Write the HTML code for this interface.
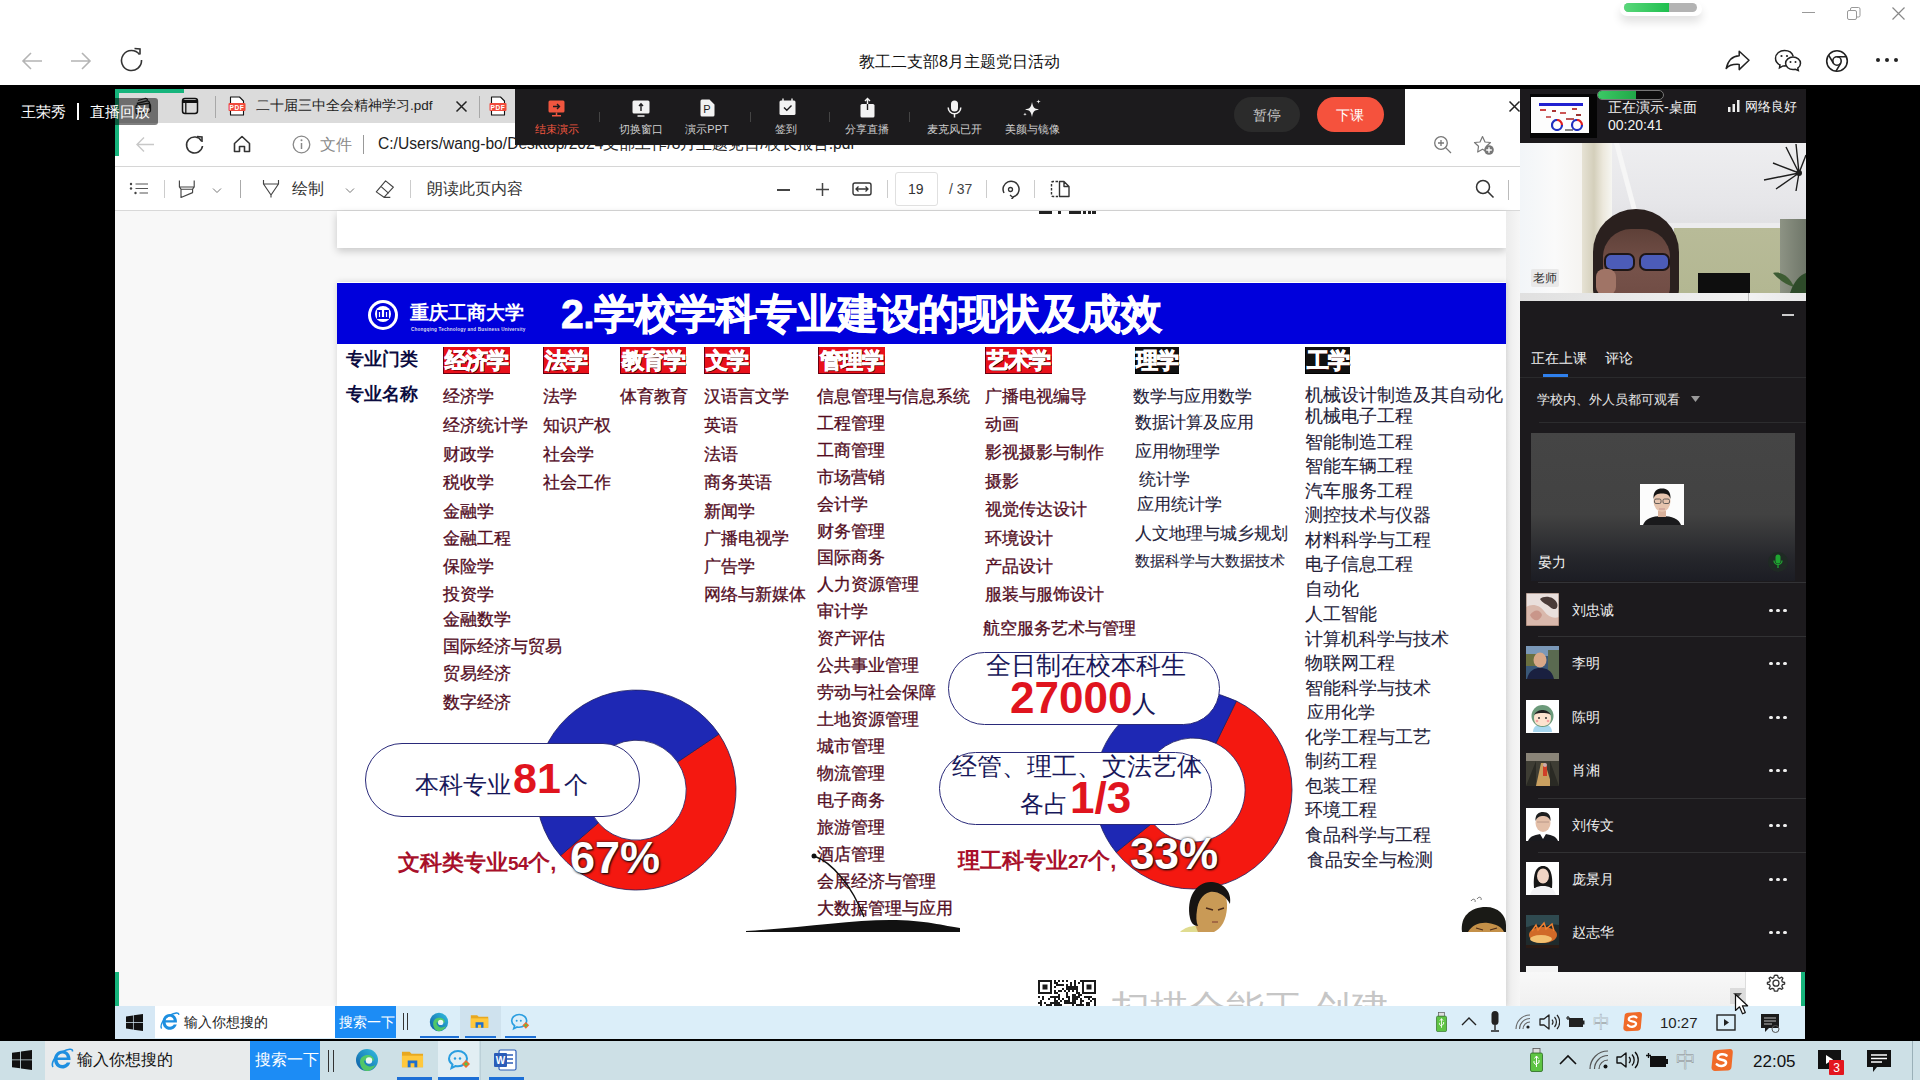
<!DOCTYPE html><html><head><meta charset="utf-8"><style>
*{margin:0;padding:0;box-sizing:border-box}
html,body{width:1920px;height:1080px;overflow:hidden;background:#000;font-family:"Liberation Sans",sans-serif}
.t{position:absolute;white-space:nowrap}
.r{position:absolute}
</style></head><body>
<div class="r" style="left:0px;top:0px;width:1920px;height:85px;background:#fff;"></div>
<svg class="r" style="left:20px;top:50px;" width="24" height="22" viewBox="0 0 24 22"><path d="M22 11H3M11 3L3 11L11 19" stroke="#b4b4b4" stroke-width="1.6" fill="none"/></svg>
<svg class="r" style="left:69px;top:50px;" width="24" height="22" viewBox="0 0 24 22"><path d="M2 11H21M13 3L21 11L13 19" stroke="#b4b4b4" stroke-width="1.6" fill="none"/></svg>
<svg class="r" style="left:119px;top:46px;" width="26" height="26" viewBox="0 0 26 26"><path d="M20.5 8.5A10 10 0 1 0 22.5 14" stroke="#333" stroke-width="1.6" fill="none"/><path d="M15.5 2.5L21 3V8.5" stroke="#333" stroke-width="1.6" fill="none"/></svg>
<div class="t " style="left:859px;top:54.0px;font-size:16px;line-height:16px;color:#111;font-weight:normal;">教工二支部8月主题党日活动</div>
<div class="r" style="left:1620px;top:2px;width:82px;height:14px;background:transparent;border-radius:8px;box-shadow:0 6px 10px rgba(0,0,0,0.12)"></div>
<div class="r" style="left:1624px;top:3px;width:73px;height:9px;background:#b3b3b3;border-radius:5px"></div>
<div class="r" style="left:1624px;top:3px;width:45px;height:9px;background:linear-gradient(90deg,#5ad77a,#1fbf4f);border-radius:5px 0 0 5px"></div>
<div class="r" style="left:1802px;top:12px;width:13px;height:1px;background:#999;"></div>
<svg class="r" style="left:1846px;top:6px;" width="16" height="16" viewBox="0 0 16 16"><rect x="1.5" y="4.5" width="9" height="9" rx="1.5" stroke="#999" fill="none"/><path d="M4.5 4.5V3A1.5 1.5 0 0 1 6 1.5H12.5A1.5 1.5 0 0 1 14 3V9.5A1.5 1.5 0 0 1 12.5 11H10.5" stroke="#999" fill="none"/></svg>
<svg class="r" style="left:1891px;top:6px;" width="15" height="15" viewBox="0 0 15 15"><path d="M1.5 1.5L13.5 13.5M13.5 1.5L1.5 13.5" stroke="#888" stroke-width="1.2"/></svg>
<svg class="r" style="left:1724px;top:48px;" width="28" height="24" viewBox="0 0 28 24"><path d="M2.2 20.4C4 12.5 9 8 15.2 7.7V3.2L25 12.3L15.2 21.6V16.4C9 16 5 17 2.2 20.4Z" stroke="#222" stroke-width="1.5" fill="none" stroke-linejoin="round"/></svg>
<svg class="r" style="left:1774px;top:49px;" width="28" height="24" viewBox="0 0 28 24"><path d="M12 16.5C11.5 16.8 10 17 9 16.9L5.5 18.8L6 16C3 14.5 1.5 12 1.5 9.3C1.5 4.9 5.5 1.5 10.5 1.5C14.7 1.5 18.2 4 19.2 7.3" stroke="#222" stroke-width="1.5" fill="none"/><path d="M19 8C23 8 26.5 10.8 26.5 14.3C26.5 16.4 25.5 18 23.8 19.2L24.3 21.5L21.3 20.2C20.5 20.5 19.8 20.6 19 20.6C15 20.6 11.6 17.8 11.6 14.3C11.6 10.8 15 8 19 8Z" stroke="#222" stroke-width="1.5" fill="none"/><circle cx="7.5" cy="7" r="1.1" fill="#222"/><circle cx="13" cy="7" r="1.1" fill="#222"/><circle cx="16.5" cy="13" r="1" fill="#222"/><circle cx="21.5" cy="13" r="1" fill="#222"/></svg>
<svg class="r" style="left:1825px;top:49px;" width="24" height="24" viewBox="0 0 24 24"><circle cx="12" cy="12" r="10.3" stroke="#222" stroke-width="1.6" fill="none"/><circle cx="12" cy="12" r="4.2" stroke="#222" stroke-width="1.6" fill="none"/><path d="M12 7.8H21.5M8.3 14L3.6 6.2M15.8 14.2L11 22.2" stroke="#222" stroke-width="1.6" fill="none"/></svg>
<div class="r" style="left:1876px;top:58px;width:4px;height:4px;background:#222;border-radius:50%"></div>
<div class="r" style="left:1885px;top:58px;width:4px;height:4px;background:#222;border-radius:50%"></div>
<div class="r" style="left:1894px;top:58px;width:4px;height:4px;background:#222;border-radius:50%"></div>
<div class="t " style="left:21px;top:103.5px;font-size:15px;line-height:15px;color:#fff;font-weight:normal;">王荣秀</div>
<div class="r" style="left:77px;top:103px;width:1.5px;height:17px;background:#fff;"></div>
<div class="r" style="left:115px;top:89px;width:1405px;height:34px;background:#dbdbdb;"></div>
<div class="r" style="left:115px;top:123px;width:1405px;height:43px;background:#fff;"></div>
<div class="r" style="left:115px;top:166px;width:1405px;height:1px;background:#d6d6d6;"></div>
<div class="r" style="left:115px;top:167px;width:1405px;height:44px;background:#fff;"></div>
<div class="r" style="left:115px;top:210px;width:1405px;height:1px;background:#d9d9d9;"></div>
<div class="r" style="left:115px;top:211px;width:1405px;height:795px;background:#f8f8f8;"></div>
<div class="r" style="left:115px;top:89px;width:69px;height:4px;background:#16b47c;"></div>
<div class="r" style="left:115px;top:89px;width:4px;height:67px;background:#16b47c;"></div>
<div class="r" style="left:115px;top:972px;width:4px;height:34px;background:#16b47c;"></div>
<svg class="r" style="left:133px;top:96px;" width="22" height="20" viewBox="0 0 22 20"><g stroke="#222" stroke-width="1.3" fill="none" stroke-linejoin="round"><path d="M5 4.5L12 2.5C13.5 2.2 14.5 3 14.5 4.5"/><path d="M3.8 7.5L13.5 5C15 4.7 16.5 5.5 16.5 7V13"/><path d="M3 10.5C3 9.5 3.5 9 4.5 8.8L15 7.5C16.5 7.3 17.5 8.2 17.5 9.5V14.5C17.5 15.5 17 16 16 16.2L5 18C3.8 18.2 3 17.3 3 16.2Z"/></g></svg>
<svg class="r" style="left:181px;top:97px;" width="18" height="18" viewBox="0 0 18 18"><rect x="1.5" y="1.5" width="15" height="15" rx="2.5" stroke="#111" stroke-width="1.5" fill="none"/><path d="M1.5 4.5H16.5" stroke="#111" stroke-width="3"/><path d="M4.8 4.5V16.5" stroke="#111" stroke-width="1.3"/></svg>
<div class="r" style="left:84px;top:98px;width:74px;height:27px;background:rgba(0,0,0,0.5);border-radius:3px"></div>
<div class="t " style="left:90px;top:103.5px;font-size:15px;line-height:15px;color:#fff;font-weight:normal;">直播回放</div>
<div class="r" style="left:215px;top:96px;width:1px;height:22px;background:#a8a8a8;"></div>
<svg class="r" style="left:228px;top:96px;" width="18" height="20" viewBox="0 0 18 20"><path d="M2.5 1H11.5L15.5 5V19H2.5Z" fill="#fff" stroke="#111" stroke-width="1.1" stroke-linejoin="round"/><rect x="0.5" y="7" width="17" height="8" rx="1" fill="#f04a3c"/><text x="9" y="13.6" font-size="6.5" font-family="Liberation Sans" font-weight="bold" fill="#fff" text-anchor="middle" letter-spacing="0.6">PDF</text></svg>
<div class="t " style="left:256px;top:99.2px;font-size:13.5px;line-height:13.5px;color:#222;font-weight:normal;">二十届三中全会精神学习.pdf</div>
<svg class="r" style="left:455px;top:100px;" width="13" height="13" viewBox="0 0 13 13"><path d="M1.5 1.5L11.5 11.5M11.5 1.5L1.5 11.5" stroke="#222" stroke-width="1.5"/></svg>
<div class="r" style="left:479px;top:96px;width:1px;height:22px;background:#a8a8a8;"></div>
<svg class="r" style="left:489px;top:96px;" width="18" height="20" viewBox="0 0 18 20"><path d="M2.5 1H11.5L15.5 5V19H2.5Z" fill="#fff" stroke="#111" stroke-width="1.1" stroke-linejoin="round"/><rect x="0.5" y="7" width="17" height="8" rx="1" fill="#f04a3c"/><text x="9" y="13.6" font-size="6.5" font-family="Liberation Sans" font-weight="bold" fill="#fff" text-anchor="middle" letter-spacing="0.6">PDF</text></svg>
<div class="r" style="left:1405px;top:89px;width:115px;height:34px;background:#fff;"></div>
<svg class="r" style="left:1508px;top:100px;" width="13" height="13" viewBox="0 0 13 13"><path d="M1.5 1.5L11.5 11.5M11.5 1.5L1.5 11.5" stroke="#222" stroke-width="1.5"/></svg>
<svg class="r" style="left:135px;top:136px;" width="20" height="17" viewBox="0 0 20 17"><path d="M19 8.5H2M9 1.5L2 8.5L9 15.5" stroke="#c8c8c8" stroke-width="1.4" fill="none"/></svg>
<svg class="r" style="left:184px;top:134px;" width="21" height="21" viewBox="0 0 21 21"><path d="M17.5 7A8 8 0 1 0 18.5 12" stroke="#333" stroke-width="1.6" fill="none"/><path d="M13 2.5L18 3V8" stroke="#333" stroke-width="1.6" fill="none"/></svg>
<svg class="r" style="left:232px;top:134px;" width="20" height="20" viewBox="0 0 20 20"><path d="M2.5 9.5L10 2.5L17.5 9.5V17.5H12.5V12.5H7.5V17.5H2.5Z" stroke="#333" stroke-width="1.6" fill="none" stroke-linejoin="round"/></svg>
<svg class="r" style="left:292px;top:135px;" width="19" height="19" viewBox="0 0 19 19"><circle cx="9.5" cy="9.5" r="8.3" stroke="#888" stroke-width="1.3" fill="none"/><path d="M9.5 8V14" stroke="#888" stroke-width="1.5"/><circle cx="9.5" cy="5.3" r="1" fill="#888"/></svg>
<div class="t " style="left:320px;top:137.0px;font-size:16px;line-height:16px;color:#8a8a8a;font-weight:normal;">文件</div>
<div class="r" style="left:363px;top:135px;width:1px;height:19px;background:#999;"></div>
<div class="t " style="left:378px;top:136.2px;font-size:15.6px;line-height:15.6px;color:#222;font-weight:normal;">C:/Users/wang-bo/Desktop/2024支部工作/8月主题党日/校长报告.pdf</div>
<svg class="r" style="left:1433px;top:135px;" width="20" height="20" viewBox="0 0 20 20"><circle cx="8" cy="8" r="6.3" stroke="#777" stroke-width="1.3" fill="none"/><path d="M12.6 12.6L18 18M5 8H11M8 5V11" stroke="#777" stroke-width="1.3"/></svg>
<svg class="r" style="left:1473px;top:135px;" width="22" height="20" viewBox="0 0 22 20"><path d="M9.5 1.5L12 7L17.5 7.5L13.5 11.3L14.3 17L9.5 14.2L4.7 17L5.5 11.3L1.5 7.5L7 7Z" stroke="#777" stroke-width="1.2" fill="none" stroke-linejoin="round"/><circle cx="16" cy="15" r="4.8" fill="#777"/><path d="M16 12.2V17.8M13.2 15H18.8" stroke="#fff" stroke-width="1.4"/></svg>
<svg class="r" style="left:128px;top:180px;" width="22" height="16" viewBox="0 0 22 16"><circle cx="3" cy="4" r="1.2" fill="#444"/><circle cx="3" cy="8.5" r="1.2" fill="#444"/><circle cx="7.5" cy="13" r="1.2" fill="#444"/><path d="M7.5 4H20M7.5 8.5H20M11.5 13H20" stroke="#555" stroke-width="1.1"/></svg>
<div class="r" style="left:164px;top:180px;width:1px;height:18px;background:#ccc;"></div>
<svg class="r" style="left:177px;top:179px;" width="20" height="20" viewBox="0 0 20 20"><path d="M2.4 1.5V8L4 10.2V18.5L15.6 13.6V10.2L17.2 8V1.5M2.4 8H17.2M4 10.2H15.6" stroke="#444" stroke-width="1.15" fill="none" stroke-linejoin="round"/></svg>
<svg class="r" style="left:211px;top:186px;" width="12" height="8" viewBox="0 0 12 8"><path d="M2 2.5L6 6.5L10 2.5" stroke="#777" stroke-width="1" fill="none"/></svg>
<div class="r" style="left:240px;top:180px;width:1px;height:18px;background:#aaa;"></div>
<svg class="r" style="left:262px;top:179px;" width="20" height="20" viewBox="0 0 20 20"><path d="M1.5 1V5H16.5V1M1.5 5L9 16L16.5 5M9 16V18.5" stroke="#444" stroke-width="1.15" fill="none" stroke-linejoin="round"/></svg>
<div class="t " style="left:292px;top:181.0px;font-size:16px;line-height:16px;color:#333;font-weight:normal;">绘制</div>
<svg class="r" style="left:344px;top:186px;" width="12" height="8" viewBox="0 0 12 8"><path d="M2 2.5L6 6.5L10 2.5" stroke="#777" stroke-width="1" fill="none"/></svg>
<svg class="r" style="left:375px;top:179px;" width="20" height="20" viewBox="0 0 20 20"><path d="M1.3 12.9L10.6 1.9L18.4 8.2L9 18.3Z M5.9 7.4L13.7 14.4 M9 18.3H15.3" stroke="#444" stroke-width="1.15" fill="none" stroke-linejoin="round"/></svg>
<div class="r" style="left:410px;top:180px;width:1px;height:18px;background:#ccc;"></div>
<div class="t " style="left:427px;top:181.0px;font-size:16px;line-height:16px;color:#333;font-weight:normal;">朗读此页内容</div>
<div class="r" style="left:777px;top:189px;width:13px;height:1.5px;background:#444;"></div>
<svg class="r" style="left:815px;top:182px;" width="15" height="15" viewBox="0 0 15 15"><path d="M7.5 1V14M1 7.5H14" stroke="#444" stroke-width="1.5"/></svg>
<svg class="r" style="left:852px;top:181px;" width="20" height="16" viewBox="0 0 20 16"><rect x="1" y="2" width="18" height="12" rx="2" stroke="#333" stroke-width="1.4" fill="none"/><path d="M4 8H16M6.5 5.5L4 8L6.5 10.5M13.5 5.5L16 8L13.5 10.5" stroke="#333" stroke-width="1.3" fill="none"/></svg>
<div class="r" style="left:887px;top:180px;width:1px;height:18px;background:#ccc;"></div>
<div class="r" style="left:895px;top:172px;width:43px;height:34px;background:#fff;border:1px solid #e0e0e0;border-radius:3px"></div>
<div class="t " style="left:908px;top:182.0px;font-size:14px;line-height:14px;color:#333;font-weight:normal;">19</div>
<div class="t " style="left:949px;top:182.0px;font-size:14px;line-height:14px;color:#444;font-weight:normal;">/ 37</div>
<div class="r" style="left:986px;top:180px;width:1px;height:18px;background:#ccc;"></div>
<svg class="r" style="left:1001px;top:179px;" width="20" height="20" viewBox="0 0 20 20"><path d="M3 14A8 8 0 1 1 12 18" stroke="#333" stroke-width="1.5" fill="none"/><path d="M9 16L12 18.5L10 21" stroke="#333" stroke-width="1.4" fill="none"/><circle cx="9.5" cy="10.5" r="2" stroke="#333" stroke-width="1.3" fill="none"/></svg>
<div class="r" style="left:1034px;top:180px;width:1px;height:18px;background:#ccc;"></div>
<svg class="r" style="left:1050px;top:180px;" width="21" height="18" viewBox="0 0 21 18"><path d="M8 1.5H3A1.5 1.5 0 0 0 1.5 3V15A1.5 1.5 0 0 0 3 16.5H8" stroke="#333" stroke-width="1.4" fill="none" stroke-dasharray="2.5 1.5"/><path d="M9.5 1.5H14L19 6.5V16.5H9.5Z M14 1.5V6.5H19" stroke="#333" stroke-width="1.4" fill="none" stroke-linejoin="round"/></svg>
<svg class="r" style="left:1475px;top:179px;" width="20" height="20" viewBox="0 0 20 20"><circle cx="8" cy="8" r="6.5" stroke="#333" stroke-width="1.5" fill="none"/><path d="M12.8 12.8L18.5 18.5" stroke="#333" stroke-width="1.6"/></svg>
<div class="r" style="left:1508px;top:180px;width:1px;height:20px;background:#bbb;"></div>
<div class="r" style="left:337px;top:211px;width:1169px;height:37px;background:#fff;box-shadow:0 3px 8px rgba(0,0,0,0.2)"></div>
<div class="r" style="left:1039px;top:211px;width:13px;height:3px;background:#222;"></div>
<div class="r" style="left:1058px;top:211px;width:3px;height:3px;background:#222;"></div>
<div class="r" style="left:1069px;top:211px;width:12px;height:3px;background:#222;"></div>
<div class="r" style="left:1083px;top:211px;width:3px;height:3px;background:#222;"></div>
<div class="r" style="left:1088px;top:211px;width:3px;height:3px;background:#222;"></div>
<div class="r" style="left:1092px;top:211px;width:4px;height:3px;background:#222;"></div>
<div class="r" style="left:1506px;top:211px;width:14px;height:795px;background:linear-gradient(90deg,#ececec,#f6f6f6);"></div>
<div class="r" style="left:337px;top:282px;width:1169px;height:724px;background:#fff;box-shadow:0 0 6px rgba(0,0,0,0.15)"></div>
<div class="r" style="left:337px;top:283px;width:1169px;height:61px;background:#0000dc;"></div>
<svg class="r" style="left:366px;top:298px;" width="34" height="34" viewBox="0 0 34 34"><circle cx="17" cy="17" r="15" fill="#fff"/><circle cx="17" cy="17" r="12" fill="#0000dc"/><circle cx="17" cy="16" r="8" fill="#fff"/><path d="M12 20V13H15V20M19 20V13H22V20M11 20H23" stroke="#0000dc" stroke-width="1.8" fill="none"/></svg>
<div class="t " style="left:410px;top:302.5px;font-size:19px;line-height:19px;color:#fff;font-weight:bold;font-family:"Liberation Serif",serif;letter-spacing:2.4px;font-style:italic">重庆工商大学</div>
<div class="t " style="left:411px;top:327.7px;font-size:4.6px;line-height:4.6px;color:#dde;font-weight:bold;letter-spacing:0.2px">Chongqing Technology and Business University</div>
<div class="t " style="left:561px;top:293.5px;font-size:41px;line-height:41px;color:#fff;font-weight:bold;letter-spacing:-0.5px;-webkit-text-stroke:0.8px #fff">2.学校学科专业建设的现状及成效</div>
<div class="t " style="left:346px;top:351.2px;font-size:17.5px;line-height:17.5px;color:#0c0c40;font-weight:bold;">专业门类</div>
<div class="t " style="left:346px;top:386.2px;font-size:17.5px;line-height:17.5px;color:#0c0c40;font-weight:bold;">专业名称</div>
<div class="r" style="left:443px;top:347px;width:67px;height:27px;background:#e8101a;box-shadow:inset 1px -1px 0 #6a0010"></div>
<div class="t" style="left:443px;top:347px;width:67px;height:27px;text-align:center;font-size:22px;line-height:28px;color:#fff;font-weight:bold;letter-spacing:-1px;-webkit-text-stroke:0.9px #fff;text-shadow:1px 1px 0 #300">经济学</div>
<div class="r" style="left:543px;top:347px;width:46px;height:27px;background:#e8101a;box-shadow:inset 1px -1px 0 #6a0010"></div>
<div class="t" style="left:543px;top:347px;width:46px;height:27px;text-align:center;font-size:22px;line-height:28px;color:#fff;font-weight:bold;letter-spacing:-1px;-webkit-text-stroke:0.9px #fff;text-shadow:1px 1px 0 #300">法学</div>
<div class="r" style="left:620px;top:347px;width:66px;height:27px;background:#e8101a;box-shadow:inset 1px -1px 0 #6a0010"></div>
<div class="t" style="left:620px;top:347px;width:66px;height:27px;text-align:center;font-size:22px;line-height:28px;color:#fff;font-weight:bold;letter-spacing:-1px;-webkit-text-stroke:0.9px #fff;text-shadow:1px 1px 0 #300">教育学</div>
<div class="r" style="left:704px;top:347px;width:46px;height:27px;background:#e8101a;box-shadow:inset 1px -1px 0 #6a0010"></div>
<div class="t" style="left:704px;top:347px;width:46px;height:27px;text-align:center;font-size:22px;line-height:28px;color:#fff;font-weight:bold;letter-spacing:-1px;-webkit-text-stroke:0.9px #fff;text-shadow:1px 1px 0 #300">文学</div>
<div class="r" style="left:818px;top:347px;width:67px;height:27px;background:#e8101a;box-shadow:inset 1px -1px 0 #6a0010"></div>
<div class="t" style="left:818px;top:347px;width:67px;height:27px;text-align:center;font-size:22px;line-height:28px;color:#fff;font-weight:bold;letter-spacing:-1px;-webkit-text-stroke:0.9px #fff;text-shadow:1px 1px 0 #300">管理学</div>
<div class="r" style="left:985px;top:347px;width:67px;height:27px;background:#e8101a;box-shadow:inset 1px -1px 0 #6a0010"></div>
<div class="t" style="left:985px;top:347px;width:67px;height:27px;text-align:center;font-size:22px;line-height:28px;color:#fff;font-weight:bold;letter-spacing:-1px;-webkit-text-stroke:0.9px #fff;text-shadow:1px 1px 0 #300">艺术学</div>
<div class="r" style="left:1135px;top:347px;width:44px;height:27px;background:#111;box-shadow:inset 1px -1px 0 #000"></div>
<div class="t" style="left:1135px;top:347px;width:44px;height:27px;text-align:center;font-size:22px;line-height:28px;color:#fff;font-weight:bold;letter-spacing:-1px;-webkit-text-stroke:0.9px #fff;text-shadow:1px 1px 0 #300">理学</div>
<div class="r" style="left:1305px;top:347px;width:45px;height:27px;background:#111;box-shadow:inset 1px -1px 0 #000"></div>
<div class="t" style="left:1305px;top:347px;width:45px;height:27px;text-align:center;font-size:22px;line-height:28px;color:#fff;font-weight:bold;letter-spacing:-1px;-webkit-text-stroke:0.9px #fff;text-shadow:1px 1px 0 #300">工学</div>
<div class="t " style="left:443px;top:388.3px;font-size:17.4px;line-height:17.4px;color:#520c1e;font-weight:normal;-webkit-text-stroke:0.3px #520c1e">经济学</div>
<div class="t " style="left:443px;top:417.3px;font-size:17.4px;line-height:17.4px;color:#520c1e;font-weight:normal;-webkit-text-stroke:0.3px #520c1e">经济统计学</div>
<div class="t " style="left:443px;top:446.3px;font-size:17.4px;line-height:17.4px;color:#520c1e;font-weight:normal;-webkit-text-stroke:0.3px #520c1e">财政学</div>
<div class="t " style="left:443px;top:474.3px;font-size:17.4px;line-height:17.4px;color:#520c1e;font-weight:normal;-webkit-text-stroke:0.3px #520c1e">税收学</div>
<div class="t " style="left:443px;top:503.3px;font-size:17.4px;line-height:17.4px;color:#520c1e;font-weight:normal;-webkit-text-stroke:0.3px #520c1e">金融学</div>
<div class="t " style="left:443px;top:530.3px;font-size:17.4px;line-height:17.4px;color:#520c1e;font-weight:normal;-webkit-text-stroke:0.3px #520c1e">金融工程</div>
<div class="t " style="left:443px;top:558.3px;font-size:17.4px;line-height:17.4px;color:#520c1e;font-weight:normal;-webkit-text-stroke:0.3px #520c1e">保险学</div>
<div class="t " style="left:443px;top:586.3px;font-size:17.4px;line-height:17.4px;color:#520c1e;font-weight:normal;-webkit-text-stroke:0.3px #520c1e">投资学</div>
<div class="t " style="left:443px;top:611.3px;font-size:17.4px;line-height:17.4px;color:#520c1e;font-weight:normal;-webkit-text-stroke:0.3px #520c1e">金融数学</div>
<div class="t " style="left:443px;top:638.3px;font-size:17.4px;line-height:17.4px;color:#520c1e;font-weight:normal;-webkit-text-stroke:0.3px #520c1e">国际经济与贸易</div>
<div class="t " style="left:443px;top:665.3px;font-size:17.4px;line-height:17.4px;color:#520c1e;font-weight:normal;-webkit-text-stroke:0.3px #520c1e">贸易经济</div>
<div class="t " style="left:443px;top:694.3px;font-size:17.4px;line-height:17.4px;color:#520c1e;font-weight:normal;-webkit-text-stroke:0.3px #520c1e">数字经济</div>
<div class="t " style="left:543px;top:388.3px;font-size:17.4px;line-height:17.4px;color:#520c1e;font-weight:normal;-webkit-text-stroke:0.3px #520c1e">法学</div>
<div class="t " style="left:543px;top:417.3px;font-size:17.4px;line-height:17.4px;color:#520c1e;font-weight:normal;-webkit-text-stroke:0.3px #520c1e">知识产权</div>
<div class="t " style="left:543px;top:446.3px;font-size:17.4px;line-height:17.4px;color:#520c1e;font-weight:normal;-webkit-text-stroke:0.3px #520c1e">社会学</div>
<div class="t " style="left:543px;top:474.3px;font-size:17.4px;line-height:17.4px;color:#520c1e;font-weight:normal;-webkit-text-stroke:0.3px #520c1e">社会工作</div>
<div class="t " style="left:620px;top:388.3px;font-size:17.4px;line-height:17.4px;color:#520c1e;font-weight:normal;-webkit-text-stroke:0.3px #520c1e">体育教育</div>
<div class="t " style="left:704px;top:388.3px;font-size:17.4px;line-height:17.4px;color:#520c1e;font-weight:normal;-webkit-text-stroke:0.3px #520c1e">汉语言文学</div>
<div class="t " style="left:704px;top:417.3px;font-size:17.4px;line-height:17.4px;color:#520c1e;font-weight:normal;-webkit-text-stroke:0.3px #520c1e">英语</div>
<div class="t " style="left:704px;top:446.3px;font-size:17.4px;line-height:17.4px;color:#520c1e;font-weight:normal;-webkit-text-stroke:0.3px #520c1e">法语</div>
<div class="t " style="left:704px;top:474.3px;font-size:17.4px;line-height:17.4px;color:#520c1e;font-weight:normal;-webkit-text-stroke:0.3px #520c1e">商务英语</div>
<div class="t " style="left:704px;top:503.3px;font-size:17.4px;line-height:17.4px;color:#520c1e;font-weight:normal;-webkit-text-stroke:0.3px #520c1e">新闻学</div>
<div class="t " style="left:704px;top:530.3px;font-size:17.4px;line-height:17.4px;color:#520c1e;font-weight:normal;-webkit-text-stroke:0.3px #520c1e">广播电视学</div>
<div class="t " style="left:704px;top:558.3px;font-size:17.4px;line-height:17.4px;color:#520c1e;font-weight:normal;-webkit-text-stroke:0.3px #520c1e">广告学</div>
<div class="t " style="left:704px;top:586.3px;font-size:17.4px;line-height:17.4px;color:#520c1e;font-weight:normal;-webkit-text-stroke:0.3px #520c1e">网络与新媒体</div>
<div class="t " style="left:817px;top:388.3px;font-size:17.4px;line-height:17.4px;color:#520c1e;font-weight:normal;-webkit-text-stroke:0.3px #520c1e">信息管理与信息系统</div>
<div class="t " style="left:817px;top:415.3px;font-size:17.4px;line-height:17.4px;color:#520c1e;font-weight:normal;-webkit-text-stroke:0.3px #520c1e">工程管理</div>
<div class="t " style="left:817px;top:442.3px;font-size:17.4px;line-height:17.4px;color:#520c1e;font-weight:normal;-webkit-text-stroke:0.3px #520c1e">工商管理</div>
<div class="t " style="left:817px;top:469.3px;font-size:17.4px;line-height:17.4px;color:#520c1e;font-weight:normal;-webkit-text-stroke:0.3px #520c1e">市场营销</div>
<div class="t " style="left:817px;top:496.3px;font-size:17.4px;line-height:17.4px;color:#520c1e;font-weight:normal;-webkit-text-stroke:0.3px #520c1e">会计学</div>
<div class="t " style="left:817px;top:523.3px;font-size:17.4px;line-height:17.4px;color:#520c1e;font-weight:normal;-webkit-text-stroke:0.3px #520c1e">财务管理</div>
<div class="t " style="left:817px;top:549.3px;font-size:17.4px;line-height:17.4px;color:#520c1e;font-weight:normal;-webkit-text-stroke:0.3px #520c1e">国际商务</div>
<div class="t " style="left:817px;top:576.3px;font-size:17.4px;line-height:17.4px;color:#520c1e;font-weight:normal;-webkit-text-stroke:0.3px #520c1e">人力资源管理</div>
<div class="t " style="left:817px;top:603.3px;font-size:17.4px;line-height:17.4px;color:#520c1e;font-weight:normal;-webkit-text-stroke:0.3px #520c1e">审计学</div>
<div class="t " style="left:817px;top:630.3px;font-size:17.4px;line-height:17.4px;color:#520c1e;font-weight:normal;-webkit-text-stroke:0.3px #520c1e">资产评估</div>
<div class="t " style="left:817px;top:657.3px;font-size:17.4px;line-height:17.4px;color:#520c1e;font-weight:normal;-webkit-text-stroke:0.3px #520c1e">公共事业管理</div>
<div class="t " style="left:817px;top:684.3px;font-size:17.4px;line-height:17.4px;color:#520c1e;font-weight:normal;-webkit-text-stroke:0.3px #520c1e">劳动与社会保障</div>
<div class="t " style="left:817px;top:711.3px;font-size:17.4px;line-height:17.4px;color:#520c1e;font-weight:normal;-webkit-text-stroke:0.3px #520c1e">土地资源管理</div>
<div class="t " style="left:817px;top:738.3px;font-size:17.4px;line-height:17.4px;color:#520c1e;font-weight:normal;-webkit-text-stroke:0.3px #520c1e">城市管理</div>
<div class="t " style="left:817px;top:765.3px;font-size:17.4px;line-height:17.4px;color:#520c1e;font-weight:normal;-webkit-text-stroke:0.3px #520c1e">物流管理</div>
<div class="t " style="left:817px;top:792.3px;font-size:17.4px;line-height:17.4px;color:#520c1e;font-weight:normal;-webkit-text-stroke:0.3px #520c1e">电子商务</div>
<div class="t " style="left:817px;top:819.3px;font-size:17.4px;line-height:17.4px;color:#520c1e;font-weight:normal;-webkit-text-stroke:0.3px #520c1e">旅游管理</div>
<div class="t " style="left:817px;top:846.3px;font-size:17.4px;line-height:17.4px;color:#520c1e;font-weight:normal;-webkit-text-stroke:0.3px #520c1e">酒店管理</div>
<div class="t " style="left:817px;top:873.3px;font-size:17.4px;line-height:17.4px;color:#520c1e;font-weight:normal;-webkit-text-stroke:0.3px #520c1e">会展经济与管理</div>
<div class="t " style="left:817px;top:900.3px;font-size:17.4px;line-height:17.4px;color:#520c1e;font-weight:normal;-webkit-text-stroke:0.3px #520c1e">大数据管理与应用</div>
<div class="t " style="left:985px;top:388.3px;font-size:17.4px;line-height:17.4px;color:#520c1e;font-weight:normal;-webkit-text-stroke:0.3px #520c1e">广播电视编导</div>
<div class="t " style="left:985px;top:416.3px;font-size:17.4px;line-height:17.4px;color:#520c1e;font-weight:normal;-webkit-text-stroke:0.3px #520c1e">动画</div>
<div class="t " style="left:985px;top:444.3px;font-size:17.4px;line-height:17.4px;color:#520c1e;font-weight:normal;-webkit-text-stroke:0.3px #520c1e">影视摄影与制作</div>
<div class="t " style="left:985px;top:473.3px;font-size:17.4px;line-height:17.4px;color:#520c1e;font-weight:normal;-webkit-text-stroke:0.3px #520c1e">摄影</div>
<div class="t " style="left:985px;top:501.3px;font-size:17.4px;line-height:17.4px;color:#520c1e;font-weight:normal;-webkit-text-stroke:0.3px #520c1e">视觉传达设计</div>
<div class="t " style="left:985px;top:530.3px;font-size:17.4px;line-height:17.4px;color:#520c1e;font-weight:normal;-webkit-text-stroke:0.3px #520c1e">环境设计</div>
<div class="t " style="left:985px;top:558.3px;font-size:17.4px;line-height:17.4px;color:#520c1e;font-weight:normal;-webkit-text-stroke:0.3px #520c1e">产品设计</div>
<div class="t " style="left:985px;top:586.3px;font-size:17.4px;line-height:17.4px;color:#520c1e;font-weight:normal;-webkit-text-stroke:0.3px #520c1e">服装与服饰设计</div>
<div class="t " style="left:983px;top:620.6px;font-size:16.8px;line-height:16.8px;color:#520c1e;font-weight:normal;-webkit-text-stroke:0.3px #520c1e">航空服务艺术与管理</div>
<div class="t " style="left:1133px;top:388.3px;font-size:17.4px;line-height:17.4px;color:#24223a;font-weight:normal;-webkit-text-stroke:0.1px #24223a">数学与应用数学</div>
<div class="t " style="left:1135px;top:414.3px;font-size:17.4px;line-height:17.4px;color:#24223a;font-weight:normal;-webkit-text-stroke:0.1px #24223a">数据计算及应用</div>
<div class="t " style="left:1135px;top:443.3px;font-size:17.4px;line-height:17.4px;color:#24223a;font-weight:normal;-webkit-text-stroke:0.1px #24223a">应用物理学</div>
<div class="t " style="left:1139px;top:471.3px;font-size:17.4px;line-height:17.4px;color:#24223a;font-weight:normal;-webkit-text-stroke:0.1px #24223a">统计学</div>
<div class="t " style="left:1137px;top:496.3px;font-size:17.4px;line-height:17.4px;color:#24223a;font-weight:normal;-webkit-text-stroke:0.1px #24223a">应用统计学</div>
<div class="t " style="left:1135px;top:525.3px;font-size:17.4px;line-height:17.4px;color:#24223a;font-weight:normal;-webkit-text-stroke:0.1px #24223a">人文地理与城乡规划</div>
<div class="t " style="left:1135px;top:552.5px;font-size:15px;line-height:15px;color:#24223a;font-weight:normal;-webkit-text-stroke:0.1px #24223a">数据科学与大数据技术</div>
<div class="t " style="left:1305px;top:387.2px;font-size:17.5px;line-height:17.5px;color:#24223a;font-weight:normal;-webkit-text-stroke:0.1px #24223a">机械设计制造及其自动化</div>
<div class="t " style="left:1305px;top:408.2px;font-size:17.5px;line-height:17.5px;color:#24223a;font-weight:normal;-webkit-text-stroke:0.1px #24223a">机械电子工程</div>
<div class="t " style="left:1305px;top:434.2px;font-size:17.5px;line-height:17.5px;color:#24223a;font-weight:normal;-webkit-text-stroke:0.1px #24223a">智能制造工程</div>
<div class="t " style="left:1305px;top:458.2px;font-size:17.5px;line-height:17.5px;color:#24223a;font-weight:normal;-webkit-text-stroke:0.1px #24223a">智能车辆工程</div>
<div class="t " style="left:1305px;top:483.2px;font-size:17.5px;line-height:17.5px;color:#24223a;font-weight:normal;-webkit-text-stroke:0.1px #24223a">汽车服务工程</div>
<div class="t " style="left:1305px;top:507.2px;font-size:17.5px;line-height:17.5px;color:#24223a;font-weight:normal;-webkit-text-stroke:0.1px #24223a">测控技术与仪器</div>
<div class="t " style="left:1305px;top:532.2px;font-size:17.5px;line-height:17.5px;color:#24223a;font-weight:normal;-webkit-text-stroke:0.1px #24223a">材料科学与工程</div>
<div class="t " style="left:1305px;top:556.2px;font-size:17.5px;line-height:17.5px;color:#24223a;font-weight:normal;-webkit-text-stroke:0.1px #24223a">电子信息工程</div>
<div class="t " style="left:1305px;top:581.2px;font-size:17.5px;line-height:17.5px;color:#24223a;font-weight:normal;-webkit-text-stroke:0.1px #24223a">自动化</div>
<div class="t " style="left:1305px;top:606.2px;font-size:17.5px;line-height:17.5px;color:#24223a;font-weight:normal;-webkit-text-stroke:0.1px #24223a">人工智能</div>
<div class="t " style="left:1305px;top:631.2px;font-size:17.5px;line-height:17.5px;color:#24223a;font-weight:normal;-webkit-text-stroke:0.1px #24223a">计算机科学与技术</div>
<div class="t " style="left:1305px;top:655.2px;font-size:17.5px;line-height:17.5px;color:#24223a;font-weight:normal;-webkit-text-stroke:0.1px #24223a">物联网工程</div>
<div class="t " style="left:1305px;top:680.2px;font-size:17.5px;line-height:17.5px;color:#24223a;font-weight:normal;-webkit-text-stroke:0.1px #24223a">智能科学与技术</div>
<div class="t " style="left:1307px;top:704.3px;font-size:17.4px;line-height:17.4px;color:#24223a;font-weight:normal;-webkit-text-stroke:0.1px #24223a">应用化学</div>
<div class="t " style="left:1305px;top:729.2px;font-size:17.5px;line-height:17.5px;color:#24223a;font-weight:normal;-webkit-text-stroke:0.1px #24223a">化学工程与工艺</div>
<div class="t " style="left:1305px;top:753.2px;font-size:17.5px;line-height:17.5px;color:#24223a;font-weight:normal;-webkit-text-stroke:0.1px #24223a">制药工程</div>
<div class="t " style="left:1305px;top:778.2px;font-size:17.5px;line-height:17.5px;color:#24223a;font-weight:normal;-webkit-text-stroke:0.1px #24223a">包装工程</div>
<div class="t " style="left:1305px;top:802.2px;font-size:17.5px;line-height:17.5px;color:#24223a;font-weight:normal;-webkit-text-stroke:0.1px #24223a">环境工程</div>
<div class="t " style="left:1305px;top:827.2px;font-size:17.5px;line-height:17.5px;color:#24223a;font-weight:normal;-webkit-text-stroke:0.1px #24223a">食品科学与工程</div>
<div class="t " style="left:1307px;top:852.2px;font-size:17.6px;line-height:17.6px;color:#24223a;font-weight:normal;-webkit-text-stroke:0.1px #24223a">食品安全与检测</div>
<svg class="r" style="left:0;top:0" width="1920" height="1080"><path d="M718.9 734.1A100 100 0 0 1 560.5 855.6L598.3 822.8A50 50 0 0 0 677.5 762.0Z" fill="#f41810" stroke="#202060" stroke-width="0.8"/><path d="M560.5 855.6A100 100 0 1 1 718.9 734.1L677.5 762.0A50 50 0 1 0 598.3 822.8Z" fill="#1e28b4" stroke="#202060" stroke-width="0.8"/></svg>
<svg class="r" style="left:0;top:0" width="1920" height="1080"><path d="M1236.4 701.0A99 99 0 1 1 1116.1 852.3L1152.6 822.7A52 52 0 1 0 1215.8 743.3Z" fill="#f41810" stroke="#202060" stroke-width="0.8"/><path d="M1116.1 852.3A99 99 0 0 1 1236.4 701.0L1215.8 743.3A52 52 0 0 0 1152.6 822.7Z" fill="#1e28b4" stroke="#202060" stroke-width="0.8"/></svg>
<div class="r" style="left:365px;top:743px;width:275px;height:74px;background:#fff;border:1.5px solid #2a2a7a;border-radius:37.0px"></div>
<div class="t " style="left:415px;top:773.0px;font-size:24px;line-height:24px;color:#18185a;font-weight:normal;">本科专业</div>
<div class="t " style="left:513px;top:756.5px;font-size:43px;line-height:43px;color:#e0141e;font-weight:bold;">81</div>
<div class="t " style="left:564px;top:773.0px;font-size:24px;line-height:24px;color:#18185a;font-weight:normal;">个</div>
<div class="r" style="left:948px;top:652px;width:272px;height:73px;background:#fff;border:1.5px solid #2a2a7a;border-radius:36.5px"></div>
<div class="t " style="left:986px;top:653.7px;font-size:24.6px;line-height:24.6px;color:#18185a;font-weight:normal;">全日制在校本科生</div>
<div class="t " style="left:1010px;top:676.0px;font-size:44px;line-height:44px;color:#e0141e;font-weight:bold;">27000</div>
<div class="t " style="left:1132px;top:692.0px;font-size:24px;line-height:24px;color:#18185a;font-weight:normal;">人</div>
<div class="r" style="left:939px;top:752px;width:273px;height:73px;background:#fff;border:1.5px solid #2a2a7a;border-radius:36.5px"></div>
<div class="t " style="left:952px;top:754.6px;font-size:24.8px;line-height:24.8px;color:#18185a;font-weight:normal;">经管、理工、文法艺体</div>
<div class="t " style="left:1020px;top:792.0px;font-size:24px;line-height:24px;color:#18185a;font-weight:normal;">各占</div>
<div class="t " style="left:1070px;top:776.0px;font-size:44px;line-height:44px;color:#e0141e;font-weight:bold;">1/3</div>
<div class="t " style="left:398px;top:852.0px;font-size:22px;line-height:22px;color:#a8102a;font-weight:bold;">文科类专业<span style="font-size:19px;letter-spacing:-0.5px">54</span>个,</div>
<div class="t " style="left:570px;top:834.5px;font-size:45px;line-height:45px;color:#fff;font-weight:bold;text-shadow:0 0 3px #222,1px 1px 2px #000">67%</div>
<div class="t " style="left:958px;top:850.0px;font-size:22px;line-height:22px;color:#a8102a;font-weight:bold;">理工科专业<span style="font-size:19px;letter-spacing:-0.5px">27</span>个,</div>
<div class="t " style="left:1130px;top:832.0px;font-size:44px;line-height:44px;color:#fff;font-weight:bold;text-shadow:0 0 3px #222,1px 1px 2px #000">33%</div>
<svg class="r" style="left:740px;top:840px;" width="230" height="95" viewBox="0 0 230 95"><path d="M6 91C60 88 110 80 150 80C185 80 205 86 220 88V92H6Z" fill="#111"/><path d="M74 16C92 22 112 46 124 77" stroke="#111" stroke-width="1.5" fill="none"/><circle cx="74" cy="16" r="2.5" fill="#111"/></svg>
<svg class="r" style="left:1180px;top:878px;" width="56" height="54" viewBox="0 0 56 54"><path d="M0 54C4 50 10 48 16 48L20 54Z" fill="#e0dc90"/><path d="M14 30C14 16 22 10 32 10C42 10 48 18 47 30C46 42 42 50 34 54H18C14 46 14 38 14 30Z" fill="#c99a56"/><path d="M10 40C6 20 16 3 32 4C44 5 52 14 50 26C46 18 38 13 30 14C22 16 18 24 17 32C16 38 16 44 18 48C14 48 11 45 10 40Z" fill="#171412"/><path d="M26 30L33 32M38 32L44 30" stroke="#4a2a1a" stroke-width="1.4"/><path d="M32 44L38 44" stroke="#8a4a3a" stroke-width="1.2"/></svg>
<svg class="r" style="left:1458px;top:893px;" width="48" height="40" viewBox="0 0 48 40"><path d="M4 39C2 24 12 14 28 14C40 14 48 22 48 32V39Z" fill="#1a1a16"/><path d="M10 39C14 32 22 29 30 30C38 31 44 34 46 39Z" fill="#c49048"/><path d="M18 35L25 37M32 37L39 35" stroke="#4a2a1a" stroke-width="1.2"/><path d="M13 8C15 5 18 6 17 9M19 6C21 3 24 4 23 7" stroke="#666" stroke-width="0.9" fill="none"/></svg>
<svg class="r" style="left:1038px;top:980px;" width="58" height="26" viewBox="0 0 58 26"><g fill="#1a1a1a"><rect x="16" y="0" width="2" height="2"/><rect x="16" y="2" width="2" height="2"/><rect x="16" y="6" width="2" height="2"/><rect x="16" y="10" width="2" height="2"/><rect x="16" y="12" width="2" height="2"/><rect x="16" y="16" width="2" height="2"/><rect x="16" y="18" width="2" height="2"/><rect x="16" y="20" width="2" height="2"/><rect x="16" y="22" width="2" height="2"/><rect x="16" y="24" width="2" height="2"/><rect x="18" y="2" width="2" height="2"/><rect x="18" y="4" width="2" height="2"/><rect x="18" y="12" width="2" height="2"/><rect x="18" y="16" width="2" height="2"/><rect x="18" y="20" width="2" height="2"/><rect x="18" y="22" width="2" height="2"/><rect x="18" y="24" width="2" height="2"/><rect x="20" y="0" width="2" height="2"/><rect x="20" y="4" width="2" height="2"/><rect x="20" y="10" width="2" height="2"/><rect x="20" y="14" width="2" height="2"/><rect x="20" y="16" width="2" height="2"/><rect x="20" y="18" width="2" height="2"/><rect x="20" y="22" width="2" height="2"/><rect x="20" y="24" width="2" height="2"/><rect x="22" y="4" width="2" height="2"/><rect x="22" y="10" width="2" height="2"/><rect x="22" y="20" width="2" height="2"/><rect x="22" y="24" width="2" height="2"/><rect x="24" y="0" width="2" height="2"/><rect x="24" y="4" width="2" height="2"/><rect x="24" y="8" width="2" height="2"/><rect x="24" y="18" width="2" height="2"/><rect x="26" y="10" width="2" height="2"/><rect x="26" y="20" width="2" height="2"/><rect x="26" y="22" width="2" height="2"/><rect x="28" y="0" width="2" height="2"/><rect x="28" y="4" width="2" height="2"/><rect x="28" y="6" width="2" height="2"/><rect x="28" y="8" width="2" height="2"/><rect x="28" y="12" width="2" height="2"/><rect x="28" y="14" width="2" height="2"/><rect x="28" y="16" width="2" height="2"/><rect x="28" y="20" width="2" height="2"/><rect x="28" y="22" width="2" height="2"/><rect x="30" y="6" width="2" height="2"/><rect x="30" y="8" width="2" height="2"/><rect x="30" y="10" width="2" height="2"/><rect x="30" y="16" width="2" height="2"/><rect x="30" y="18" width="2" height="2"/><rect x="30" y="20" width="2" height="2"/><rect x="30" y="22" width="2" height="2"/><rect x="32" y="2" width="2" height="2"/><rect x="32" y="4" width="2" height="2"/><rect x="32" y="6" width="2" height="2"/><rect x="32" y="8" width="2" height="2"/><rect x="32" y="22" width="2" height="2"/><rect x="34" y="6" width="2" height="2"/><rect x="34" y="8" width="2" height="2"/><rect x="34" y="10" width="2" height="2"/><rect x="34" y="14" width="2" height="2"/><rect x="34" y="16" width="2" height="2"/><rect x="34" y="18" width="2" height="2"/><rect x="34" y="20" width="2" height="2"/><rect x="34" y="22" width="2" height="2"/><rect x="34" y="24" width="2" height="2"/><rect x="36" y="0" width="2" height="2"/><rect x="36" y="2" width="2" height="2"/><rect x="36" y="4" width="2" height="2"/><rect x="36" y="6" width="2" height="2"/><rect x="36" y="8" width="2" height="2"/><rect x="36" y="14" width="2" height="2"/><rect x="36" y="16" width="2" height="2"/><rect x="36" y="18" width="2" height="2"/><rect x="36" y="20" width="2" height="2"/><rect x="36" y="22" width="2" height="2"/><rect x="38" y="6" width="2" height="2"/><rect x="38" y="8" width="2" height="2"/><rect x="38" y="10" width="2" height="2"/><rect x="38" y="12" width="2" height="2"/><rect x="38" y="16" width="2" height="2"/><rect x="38" y="18" width="2" height="2"/><rect x="38" y="24" width="2" height="2"/><rect x="40" y="2" width="2" height="2"/><rect x="40" y="12" width="2" height="2"/><rect x="40" y="14" width="2" height="2"/><rect x="40" y="16" width="2" height="2"/><rect x="40" y="24" width="2" height="2"/><rect x="42" y="0" width="2" height="2"/><rect x="42" y="14" width="2" height="2"/><rect x="42" y="18" width="2" height="2"/><rect x="42" y="20" width="2" height="2"/><rect x="42" y="22" width="2" height="2"/><rect x="42" y="24" width="2" height="2"/><rect x="0" y="16" width="2" height="2"/><rect x="0" y="22" width="2" height="2"/><rect x="2" y="20" width="2" height="2"/><rect x="2" y="22" width="2" height="2"/><rect x="2" y="24" width="2" height="2"/><rect x="4" y="16" width="2" height="2"/><rect x="4" y="18" width="2" height="2"/><rect x="6" y="22" width="2" height="2"/><rect x="8" y="24" width="2" height="2"/><rect x="10" y="18" width="2" height="2"/><rect x="10" y="24" width="2" height="2"/><rect x="12" y="16" width="2" height="2"/><rect x="12" y="22" width="2" height="2"/><rect x="12" y="24" width="2" height="2"/><rect x="14" y="16" width="2" height="2"/><rect x="14" y="22" width="2" height="2"/><rect x="44" y="20" width="2" height="2"/><rect x="44" y="24" width="2" height="2"/><rect x="46" y="16" width="2" height="2"/><rect x="48" y="16" width="2" height="2"/><rect x="48" y="22" width="2" height="2"/><rect x="48" y="24" width="2" height="2"/><rect x="50" y="16" width="2" height="2"/><rect x="50" y="18" width="2" height="2"/><rect x="50" y="22" width="2" height="2"/><rect x="50" y="24" width="2" height="2"/><rect x="52" y="16" width="2" height="2"/><rect x="52" y="20" width="2" height="2"/><rect x="54" y="18" width="2" height="2"/><rect x="56" y="18" width="2" height="2"/><rect x="56" y="20" width="2" height="2"/><rect x="56" y="22" width="2" height="2"/><rect x="56" y="24" width="2" height="2"/></g><rect x="1" y="1" width="12" height="12" fill="none" stroke="#1a1a1a" stroke-width="2"/><rect x="4.5" y="4.5" width="5" height="5" fill="#1a1a1a"/><rect x="45" y="1" width="12" height="12" fill="none" stroke="#1a1a1a" stroke-width="2"/><rect x="48.5" y="4.5" width="5" height="5" fill="#1a1a1a"/></svg>
<div class="t " style="left:1112px;top:990.0px;font-size:38px;line-height:38px;color:#c6c6c6;font-weight:normal;">扫描全能王 创建</div>
<div class="r" style="left:1520px;top:89px;width:286px;height:54px;background:#1c1a1d;"></div>
<div class="r" style="left:1530px;top:94px;width:67px;height:44px;background:#050505;"></div>
<div class="r" style="left:1531px;top:97px;width:58px;height:36px;background:#fdfdfd;"></div>
<div class="r" style="left:1539px;top:103px;width:44px;height:3px;background:#2020d0;"></div>
<div class="r" style="left:1540px;top:109px;width:6px;height:2px;background:#c44;"></div>
<div class="r" style="left:1552px;top:110px;width:4px;height:2px;background:#a33;"></div>
<div class="r" style="left:1560px;top:112px;width:6px;height:2px;background:#c55;"></div>
<div class="r" style="left:1572px;top:108px;width:5px;height:2px;background:#b44;"></div>
<div class="r" style="left:1546px;top:116px;width:5px;height:2px;background:#c66;"></div>
<div class="r" style="left:1566px;top:118px;width:8px;height:2px;background:#b55;"></div>
<div class="r" style="left:1576px;top:114px;width:5px;height:2px;background:#933;"></div>
<svg class="r" style="left:1551px;top:119px;" width="34" height="12" viewBox="0 0 34 12"><path d="M6 1A5 5 0 1 0 11 6" stroke="#2030c0" stroke-width="2.2" fill="none"/><path d="M11 6A5 5 0 0 0 6 1" stroke="#e02020" stroke-width="2.2" fill="none"/><path d="M26 1A5 5 0 1 0 31 6" stroke="#2030c0" stroke-width="2.2" fill="none"/><path d="M31 6A5 5 0 0 0 26 1" stroke="#e02020" stroke-width="2.2" fill="none"/><path d="M14 11H22" stroke="#111" stroke-width="1"/></svg>
<div class="r" style="left:1597px;top:90px;width:67px;height:10px;background:#0e0e0e;border:1px solid #777;border-radius:5px"></div>
<div class="r" style="left:1598px;top:91px;width:38px;height:8px;background:linear-gradient(90deg,#3cc865,#20a848);border-radius:4px 0 0 4px"></div>
<div class="t " style="left:1608px;top:100.0px;font-size:14px;line-height:14px;color:#f2f2f2;font-weight:normal;">正在演示-桌面</div>
<div class="t " style="left:1608px;top:118.0px;font-size:14px;line-height:14px;color:#f2f2f2;font-weight:normal;">00:20:41</div>
<svg class="r" style="left:1728px;top:99px;" width="12" height="13" viewBox="0 0 12 13"><rect x="0" y="8" width="2.5" height="5" fill="#eee"/><rect x="4.5" y="5" width="2.5" height="8" fill="#eee"/><rect x="9" y="1" width="2.5" height="12" fill="#eee"/></svg>
<div class="t " style="left:1745px;top:99.5px;font-size:13px;line-height:13px;color:#f2f2f2;font-weight:normal;">网络良好</div>
<div class="r" style="left:1520px;top:143px;width:286px;height:150px;overflow:hidden;background:linear-gradient(180deg,#eeeef0 0%,#e6e6e9 40%,#d9d9dc 75%,#cfd0d2 100%)">
<div class="r" style="left:0;top:0;width:70px;height:150px;background:linear-gradient(90deg,#f2f5f8,#fafafa 50%,#f4f2ee)"></div>
<div class="r" style="left:62px;top:0;width:30px;height:150px;background:linear-gradient(90deg,#e6e2d4,#d4cfbb 40%,#ece8dc 70%,#f6f6f2)"></div>
<div class="r" style="left:94px;top:0;width:5px;height:72px;background:#f6f6f6;transform:skewX(15deg);transform-origin:top"></div>
<div class="r" style="left:90px;top:80px;width:196px;height:6px;background:#ececee"></div>
<div class="r" style="left:154px;top:85px;width:106px;height:65px;background:linear-gradient(180deg,#b8bb98,#b3b792)"></div>
<div class="r" style="left:260px;top:76px;width:26px;height:74px;background:linear-gradient(90deg,#8d9384,#6f7669)"></div>
<div class="r" style="left:178px;top:130px;width:52px;height:20px;background:#0e0e0e"></div>
<div class="r" style="left:73px;top:66px;width:86px;height:100px;border-radius:43px 43px 20px 20px;background:#2a201e"></div>
<div class="r" style="left:83px;top:86px;width:67px;height:80px;border-radius:28px 28px 22px 22px;background:linear-gradient(180deg,#5e4038,#76524a 50%,#6e4a42)"></div>
<div class="r" style="left:84px;top:110px;width:31px;height:18px;border-radius:7px;border:2.5px solid #1e1616;background:#4c5cb8"></div>
<div class="r" style="left:119px;top:110px;width:31px;height:18px;border-radius:7px;border:2.5px solid #1e1616;background:#4c5cb8"></div>
<div class="r" style="left:76px;top:126px;width:20px;height:26px;border-radius:8px;background:#a07466"></div>
<svg class="r" style="left:236px;top:0" width="50" height="52"><path d="M43 30L8 37M43 30L17 20M43 30L30 4M43 30L40 1M43 30L20 46M43 30L40 48M43 30L50 12" stroke="#1e1e1e" stroke-width="1.4"/><circle cx="43" cy="30" r="3" fill="#1e1e1e"/></svg>
<svg class="r" style="left:252px;top:120px" width="34" height="30"><path d="M1 10C10 8 18 14 22 24C14 22 6 16 1 10Z" fill="#3d5c33"/><path d="M18 30C22 18 28 12 34 10V30Z" fill="#2d4a29"/></svg>
<div class="r" style="left:11px;top:126px;width:28px;height:18px;background:rgba(232,232,232,0.95);border-radius:2px"></div>
<div class="t" style="left:13px;top:128px;font-size:11.5px;line-height:14px;color:#333">老师</div>
</div>
<div class="r" style="left:1520px;top:293px;width:286px;height:8px;background:linear-gradient(90deg,#e0e0e0,#f2f2f2 80%,#e8e8e8);"></div>
<div class="r" style="left:1748px;top:293px;width:1px;height:8px;background:#bbb;"></div>
<div class="r" style="left:1520px;top:301px;width:286px;height:671px;background:#1c1a1d;"></div>
<div class="r" style="left:1782px;top:314px;width:12px;height:1.5px;background:#ccc;"></div>
<div class="t " style="left:1531px;top:352.2px;font-size:13.5px;line-height:13.5px;color:#f0f0f0;font-weight:normal;">正在上课</div>
<div class="t " style="left:1605px;top:352.2px;font-size:13.5px;line-height:13.5px;color:#f0f0f0;font-weight:normal;">评论</div>
<div class="r" style="left:1543px;top:374px;width:25px;height:3px;background:#2f80ed;"></div>
<div class="r" style="left:1520px;top:377px;width:286px;height:1px;background:#2a2a2c;"></div>
<div class="t " style="left:1537px;top:392.5px;font-size:13px;line-height:13px;color:#e6e6e6;font-weight:normal;">学校内、外人员都可观看</div>
<svg class="r" style="left:1691px;top:396px;" width="9" height="6" viewBox="0 0 9 6"><path d="M0 0H9L4.5 6Z" fill="#9a9a9a"/></svg>
<div class="r" style="left:1539px;top:422px;width:267px;height:1px;background:#2c2c2e;"></div>
<div class="r" style="left:1531px;top:433px;width:264px;height:148px;background:linear-gradient(180deg,#454545 0%,#424242 55%,#25262b 85%,#1c1d24 100%);"></div>
<svg class="r" style="left:1640px;top:484px;" width="44" height="41" viewBox="0 0 44 41"><rect width="44" height="41" fill="#fcfcfc"/><path d="M3 41C5 35 12 32 22 32C32 32 39 35 41 41Z" fill="#1a1a1c"/><rect x="18" y="27" width="8" height="6" fill="#d9b29c"/><ellipse cx="22" cy="17" rx="8.5" ry="11" fill="#e6c4ae"/><path d="M13.5 15C13 7 17 4.5 22 4.5C27 4.5 31 7 30.5 15C29.5 10.5 26 9.5 22 9.5C18 9.5 14.5 10.5 13.5 15Z" fill="#151515"/><rect x="14.5" y="15" width="6.5" height="4.5" rx="1.5" fill="none" stroke="#444" stroke-width="0.8"/><rect x="23" y="15" width="6.5" height="4.5" rx="1.5" fill="none" stroke="#444" stroke-width="0.8"/><path d="M19 25H25" stroke="#b88" stroke-width="0.8"/></svg>
<div class="t " style="left:1538px;top:555.0px;font-size:14px;line-height:14px;color:#f2f2f2;font-weight:normal;">晏力</div>
<div class="r" style="left:1768px;top:552px;width:20px;height:20px;background:#1f2a24;border-radius:50%"></div>
<svg class="r" style="left:1773px;top:554px;" width="10" height="16" viewBox="0 0 10 16"><rect x="2.5" y="0.5" width="5" height="9" rx="2.5" fill="#1fa531"/><path d="M1 6.5A4 4 0 0 0 9 6.5M5 10.5V14" stroke="#1fa531" stroke-width="1.3" fill="none"/></svg>
<div class="r" style="left:1538px;top:582px;width:268px;height:1px;background:#333336;"></div>
<svg class="r" style="left:1526px;top:593px;" width="33" height="33" viewBox="0 0 33 33"><rect width="33" height="33" fill="#e9dfdc"/><path d="M0 33V14C6 10 14 12 18 18C22 24 28 26 33 24V33Z" fill="#d9b8ac"/><path d="M14 6C18 2 28 3 31 10C33 16 28 18 24 14C21 11 16 10 14 6Z" fill="#4a3b38"/><path d="M4 22C8 16 14 16 16 22C14 28 8 30 4 22Z" fill="#c9968a"/><rect x="0" y="0" width="33" height="33" fill="none" stroke="#8a6a5a" stroke-width="1"/></svg>
<div class="t " style="left:1572px;top:603.0px;font-size:14px;line-height:14px;color:#f0f0f0;font-weight:normal;">刘忠诚</div>
<div class="r" style="left:1769px;top:608.5px;width:3.5px;height:3.5px;background:#f0f0f0;border-radius:50%"></div>
<div class="r" style="left:1776px;top:608.5px;width:3.5px;height:3.5px;background:#f0f0f0;border-radius:50%"></div>
<div class="r" style="left:1783px;top:608.5px;width:3.5px;height:3.5px;background:#f0f0f0;border-radius:50%"></div>
<svg class="r" style="left:1526px;top:646px;" width="33" height="33" viewBox="0 0 33 33"><rect width="33" height="33" fill="#3a5878"/><rect width="33" height="10" fill="#7a98b8"/><path d="M22 4H33V33H22Z" fill="#5a6a50"/><path d="M0 8H10V20H0Z" fill="#6a7040"/><ellipse cx="14" cy="14" rx="6.5" ry="7.5" fill="#d8a888"/><path d="M1 33C3 24 9 22 14 22C20 22 26 24 28 33Z" fill="#1a2040"/></svg>
<div class="t " style="left:1572px;top:656.0px;font-size:14px;line-height:14px;color:#f0f0f0;font-weight:normal;">李明</div>
<div class="r" style="left:1769px;top:661.5px;width:3.5px;height:3.5px;background:#f0f0f0;border-radius:50%"></div>
<div class="r" style="left:1776px;top:661.5px;width:3.5px;height:3.5px;background:#f0f0f0;border-radius:50%"></div>
<div class="r" style="left:1783px;top:661.5px;width:3.5px;height:3.5px;background:#f0f0f0;border-radius:50%"></div>
<svg class="r" style="left:1526px;top:700px;" width="33" height="33" viewBox="0 0 33 33"><rect width="33" height="33" fill="#fff"/><path d="M7 32C7 26 12 24 16.5 24C21 24 26 26 26 32Z" fill="#a8d8f0"/><circle cx="16.5" cy="16" r="11" fill="#6c9a7a"/><path d="M8 18C8 12 12 11 16.5 11C21 11 25 12 25 18C25 24 21 26 16.5 26C12 26 8 24 8 18Z" fill="#fde3cf"/><path d="M8 15C10 11 14 10 16.5 10C19 10 23 11 25 15C22 13 19 13 16.5 13C14 13 11 13 8 15Z" fill="#222"/><circle cx="13" cy="18" r="1" fill="#333"/><circle cx="20" cy="18" r="1" fill="#333"/><circle cx="11" cy="21" r="1.3" fill="#f4a0a0"/><circle cx="22" cy="21" r="1.3" fill="#f4a0a0"/></svg>
<div class="t " style="left:1572px;top:710.0px;font-size:14px;line-height:14px;color:#f0f0f0;font-weight:normal;">陈明</div>
<div class="r" style="left:1769px;top:715.5px;width:3.5px;height:3.5px;background:#f0f0f0;border-radius:50%"></div>
<div class="r" style="left:1776px;top:715.5px;width:3.5px;height:3.5px;background:#f0f0f0;border-radius:50%"></div>
<div class="r" style="left:1783px;top:715.5px;width:3.5px;height:3.5px;background:#f0f0f0;border-radius:50%"></div>
<svg class="r" style="left:1526px;top:753px;" width="33" height="33" viewBox="0 0 33 33"><rect width="33" height="33" fill="#3e3d34"/><path d="M0 0H33V8H0Z" fill="#8a8478"/><path d="M10 33L15 10H19L26 33Z" fill="#c9a060"/><path d="M0 33L10 8V33ZM33 33L24 8V33Z" fill="#2a2a24"/><rect x="17" y="13" width="4" height="10" fill="#d04028"/><circle cx="19" cy="12" r="2" fill="#caa"/></svg>
<div class="t " style="left:1572px;top:763.0px;font-size:14px;line-height:14px;color:#f0f0f0;font-weight:normal;">肖湘</div>
<div class="r" style="left:1769px;top:768.5px;width:3.5px;height:3.5px;background:#f0f0f0;border-radius:50%"></div>
<div class="r" style="left:1776px;top:768.5px;width:3.5px;height:3.5px;background:#f0f0f0;border-radius:50%"></div>
<div class="r" style="left:1783px;top:768.5px;width:3.5px;height:3.5px;background:#f0f0f0;border-radius:50%"></div>
<svg class="r" style="left:1526px;top:808px;" width="33" height="33" viewBox="0 0 33 33"><rect width="33" height="33" fill="#fff"/><ellipse cx="17" cy="15" rx="7.5" ry="9" fill="#e3bfa8"/><path d="M9.5 13C9 6 13 4 17 4C22 4 25 7 24.5 13C23 9 20 8 17 8C14 8 11 9 9.5 13Z" fill="#1e1e1e"/><path d="M11 14H23" stroke="#b09080" stroke-width="0.8"/><path d="M2 33C4 28 10 26 17 26C24 26 30 28 32 33Z" fill="#1a1a1e"/><path d="M14 26L17 31L20 26Z" fill="#fff"/></svg>
<div class="t " style="left:1572px;top:818.0px;font-size:14px;line-height:14px;color:#f0f0f0;font-weight:normal;">刘传文</div>
<div class="r" style="left:1769px;top:823.5px;width:3.5px;height:3.5px;background:#f0f0f0;border-radius:50%"></div>
<div class="r" style="left:1776px;top:823.5px;width:3.5px;height:3.5px;background:#f0f0f0;border-radius:50%"></div>
<div class="r" style="left:1783px;top:823.5px;width:3.5px;height:3.5px;background:#f0f0f0;border-radius:50%"></div>
<svg class="r" style="left:1526px;top:862px;" width="33" height="33" viewBox="0 0 33 33"><rect width="33" height="33" fill="#fff"/><path d="M8 26C7 14 9 4 17 4C25 4 27 14 26 26Z" fill="#161616"/><ellipse cx="17" cy="14" rx="6" ry="7.5" fill="#f0d4c4"/><path d="M4 33C6 26 11 24 17 24C23 24 28 26 30 33Z" fill="#f2f2f4"/></svg>
<div class="t " style="left:1572px;top:872.0px;font-size:14px;line-height:14px;color:#f0f0f0;font-weight:normal;">庞景月</div>
<div class="r" style="left:1769px;top:877.5px;width:3.5px;height:3.5px;background:#f0f0f0;border-radius:50%"></div>
<div class="r" style="left:1776px;top:877.5px;width:3.5px;height:3.5px;background:#f0f0f0;border-radius:50%"></div>
<div class="r" style="left:1783px;top:877.5px;width:3.5px;height:3.5px;background:#f0f0f0;border-radius:50%"></div>
<svg class="r" style="left:1526px;top:915px;" width="33" height="33" viewBox="0 0 33 33"><rect width="33" height="33" fill="#1f2a2c"/><path d="M0 0H33V10C26 8 20 12 14 10C8 8 4 12 0 12Z" fill="#2f4a50"/><ellipse cx="17" cy="20" rx="14" ry="8" fill="#d06a28"/><ellipse cx="15" cy="24" rx="11" ry="4" fill="#f2c070"/><path d="M6 16L10 10L12 15L18 8L20 14L26 9L28 16" stroke="#f08030" stroke-width="1.5" fill="none"/><path d="M0 30H33V33H0Z" fill="#2a1a14"/></svg>
<div class="t " style="left:1572px;top:925.0px;font-size:14px;line-height:14px;color:#f0f0f0;font-weight:normal;">赵志华</div>
<div class="r" style="left:1769px;top:930.5px;width:3.5px;height:3.5px;background:#f0f0f0;border-radius:50%"></div>
<div class="r" style="left:1776px;top:930.5px;width:3.5px;height:3.5px;background:#f0f0f0;border-radius:50%"></div>
<div class="r" style="left:1783px;top:930.5px;width:3.5px;height:3.5px;background:#f0f0f0;border-radius:50%"></div>
<div class="r" style="left:1538px;top:636px;width:268px;height:1px;background:#313133;"></div>
<div class="r" style="left:1538px;top:798px;width:268px;height:1px;background:#313133;"></div>
<div class="r" style="left:1538px;top:852px;width:268px;height:1px;background:#313133;"></div>
<div class="r" style="left:1526px;top:966px;width:32px;height:6px;background:#f4f4f4;"></div>
<div class="r" style="left:1520px;top:972px;width:226px;height:34px;background:linear-gradient(180deg,#f8f8f8,#f0f0f0);"></div>
<div class="r" style="left:1746px;top:972px;width:55px;height:34px;background:#fff;"></div>
<div class="r" style="left:1745px;top:972px;width:1px;height:34px;background:#ddd;"></div>
<div class="r" style="left:1801px;top:972px;width:4px;height:34px;background:#16b47c;"></div>
<svg class="r" style="left:1766px;top:973px;" width="20" height="20" viewBox="0 0 20 20"><path d="M10 2.2L11.6 2.4L12.2 4.6L13.7 5.3L15.7 4.1L16.9 5.3L15.8 7.4L16.4 8.9L18.6 9.5V11.1L16.4 11.7L15.8 13.2L16.9 15.2L15.7 16.4L13.7 15.3L12.2 15.9L11.6 18.1H10H8.4L7.8 15.9L6.3 15.3L4.3 16.4L3.1 15.2L4.2 13.2L3.6 11.7L1.4 11.1V9.5L3.6 8.9L4.2 7.4L3.1 5.3L4.3 4.1L6.3 5.3L7.8 4.6L8.4 2.4Z" stroke="#333" stroke-width="1.3" fill="none" stroke-linejoin="round"/><circle cx="10" cy="10.2" r="3" stroke="#333" stroke-width="1.3" fill="none"/></svg>
<div class="r" style="left:1730px;top:988px;width:15px;height:16px;background:#dcdcdc;"></div>
<svg class="r" style="left:1733px;top:993px;" width="9" height="6" viewBox="0 0 9 6"><path d="M0 0H9L4.5 5Z" fill="#555"/></svg>
<div class="r" style="left:115px;top:1006px;width:1690px;height:33px;background:#dbeef9;"></div>
<div class="r" style="left:115px;top:1006px;width:40px;height:33px;background:#d6e8f5;"></div>
<svg class="r" style="left:126px;top:1014px;" width="17" height="17" viewBox="0 0 17 17"><svg viewBox="0 0 20 20" width="17" height="17"><path d="M0 2.8L8.2 1.7V9.5H0ZM9 1.6L20 0V9.5H9ZM0 10.3H8.2V18.3L0 17.2ZM9 10.3H20V20L9 18.4Z" fill="#111"/></svg></svg>
<div class="r" style="left:155px;top:1006px;width:180px;height:32px;background:#fff;"></div>
<svg class="r" style="left:159px;top:1011px;" width="21" height="21" viewBox="0 0 21 21"><svg viewBox="0 0 24 24" width="21" height="21"><path d="M20.5 13H7.5C7.8 16 9.8 18 12.5 18C14.5 18 16 17 16.8 15.5H20.3C19.2 19 16.2 21.5 12.5 21.5C7.5 21.5 4 17.5 4 12.5C4 7.5 7.5 3.5 12.5 3.5C17.5 3.5 20.8 7.5 20.5 13ZM7.6 10.5H16.8C16.5 8 14.8 6.5 12.2 6.5C9.8 6.5 8 8 7.6 10.5Z" fill="#1e8fe0"/><path d="M3 20C1 17 4 9 12 5C18 2 23 1 22.5 4.5" stroke="#1e8fe0" stroke-width="1.6" fill="none"/></svg></svg>
<div class="t " style="left:184px;top:1015.0px;font-size:14px;line-height:14px;color:#222;font-weight:normal;">输入你想搜的</div>
<div class="r" style="left:335px;top:1006px;width:61px;height:32px;background:#1c8cf5;"></div>
<div class="t " style="left:339px;top:1015.0px;font-size:14px;line-height:14px;color:#fff;font-weight:normal;">搜索一下</div>
<div class="r" style="left:403px;top:1013px;width:1.2px;height:17px;background:#333;"></div>
<div class="r" style="left:407px;top:1013px;width:1.2px;height:17px;background:#333;"></div>
<svg class="r" style="left:429px;top:1012px;" width="20" height="20" viewBox="0 0 20 20"><svg viewBox="0 0 24 24" width="20" height="20"><defs><linearGradient id="eg429" x1="0" y1="1" x2="1" y2="0"><stop offset="0" stop-color="#0c59a4"/><stop offset="1" stop-color="#33c0e0"/></linearGradient></defs><circle cx="12" cy="12" r="11" fill="url(#eg429)"/><path d="M5 14C5 9 9 7 12.5 7C16 7 19 9 19 12.5H9C9 16 12 18.5 15.5 18.5C17.5 18.5 19.5 17.5 20.5 16.5C19 20.5 15.5 23 12 23C7.5 23 5 18 5 14Z" fill="#5bd25b" opacity="0.85"/><circle cx="14" cy="12.5" r="3.2" fill="#fff" opacity="0.9"/></svg></svg>
<div class="r" style="left:420px;top:1036px;width:39px;height:2px;background:#1c6fd6;"></div>
<div class="r" style="left:460px;top:1006px;width:41px;height:32px;background:#cfe2ee;"></div>
<svg class="r" style="left:470px;top:1012px;" width="19" height="19" viewBox="0 0 19 19"><svg viewBox="0 0 24 24" width="19" height="19"><path d="M1 4H9L11 6H23V20H1Z" fill="#e8a820"/><path d="M1 8H23V20H1Z" fill="#ffc83d"/><path d="M7 20V13H17V20H14V16H10V20Z" fill="#1e6fd0"/></svg></svg>
<div class="r" style="left:465px;top:1036px;width:31px;height:2px;background:#1c6fd6;"></div>
<svg class="r" style="left:510px;top:1012px;" width="20" height="20" viewBox="0 0 20 20"><svg viewBox="0 0 24 24" width="20" height="20"><path d="M11 3C6 3 2 6.5 2 10.5C2 13 3.5 15 5.5 16.5L4.5 20L8.5 18C9.3 18.2 10.2 18.3 11 18.3C16 18.3 20 14.8 20 10.5C20 6.5 16 3 11 3Z" stroke="#2a9ee0" stroke-width="2" fill="none"/><circle cx="8" cy="10.5" r="1.2" fill="#2a9ee0"/><circle cx="13" cy="10.5" r="1.2" fill="#2a9ee0"/><path d="M19 12L23 16L19 20L15 16Z" fill="#f36d2a"/><path d="M19 14L21 16L19 18L17 16Z" fill="#52c44a"/></svg></svg>
<div class="r" style="left:505px;top:1036px;width:31px;height:2px;background:#1c6fd6;"></div>
<svg class="r" style="left:1435px;top:1012px;" width="13" height="20" viewBox="0 0 13 20"><svg viewBox="0 0 14 24" width="13" height="20"><rect x="3.5" y="0.5" width="7" height="5" fill="#ddd" stroke="#555" stroke-width="0.8"/><rect x="1" y="5" width="12" height="18.5" rx="1.5" fill="#5ec444" stroke="#2a6a20" stroke-width="0.8"/><path d="M7 8V19M5 10.5L7 8L9 10.5M4.5 13V15L7 17M9.5 12V14.5L7 16" stroke="#fff" stroke-width="1" fill="none"/></svg></svg>
<svg class="r" style="left:1461px;top:1016px;" width="16" height="10" viewBox="0 0 16 10"><path d="M1 9L8 2L15 9" stroke="#222" stroke-width="1.4" fill="none"/></svg>
<svg class="r" style="left:1488px;top:1010px;" width="14" height="24" viewBox="0 0 14 24"><rect x="3.5" y="1" width="7" height="14" rx="3.5" fill="#222"/><path d="M7 15V20M3 21H11" stroke="#222" stroke-width="1.4"/></svg>
<svg class="r" style="left:1515px;top:1014px;" width="16" height="16" viewBox="0 0 16 16"><path d="M1 15A14 14 0 0 1 15 1M4.5 15A10.5 10.5 0 0 1 15 4.5M8 15A7 7 0 0 1 15 8" stroke="#666" stroke-width="1.1" fill="none"/><circle cx="13" cy="13" r="1.6" fill="#222"/></svg>
<svg class="r" style="left:1538px;top:1012px;" width="22" height="20" viewBox="0 0 22 20"><path d="M2 7H6L11 3V17L6 13H2Z" stroke="#222" stroke-width="1.3" fill="none" stroke-linejoin="round"/><path d="M14 7.5A4 4 0 0 1 14 12.5M16.5 5A7.5 7.5 0 0 1 16.5 15M19 3A10.5 10.5 0 0 1 19 17" stroke="#222" stroke-width="1.2" fill="none"/></svg>
<svg class="r" style="left:1565px;top:1014px;" width="20" height="14" viewBox="0 0 20 14"><path d="M3 2V6M1 4H5" stroke="#222" stroke-width="1.2"/><rect x="4.5" y="4.5" width="13" height="8" fill="#222" stroke="#222" stroke-width="1"/><rect x="18" y="6.5" width="1.5" height="4" fill="#222"/></svg>
<div class="t " style="left:1593px;top:1013.5px;font-size:17px;line-height:17px;color:#b8b8b8;font-weight:normal;-webkit-text-stroke:0.3px #888;color:transparent">中</div>
<svg class="r" style="left:1622px;top:1011px;" width="21" height="21" viewBox="0 0 21 21"><svg viewBox="0 0 24 24" width="21" height="21"><path d="M3 5C3 3 5 2 7 2L20 1C22 1 23 2.5 22.8 4.5L21.5 19C21.3 21 19.8 22.5 17.8 22.5L5 23C3 23 1.5 21.5 1.5 19.5Z" fill="#f06a28"/><path d="M16.5 7.5C15.5 6.5 13.5 6 11.5 6.3C9 6.7 7.5 8 7.8 9.8C8.2 12.5 15.5 11 16 14.2C16.3 16.2 14.5 17.8 11.8 18C9.8 18.2 8 17.5 6.8 16.3" stroke="#fff" stroke-width="2.6" fill="none" stroke-linecap="round"/></svg></svg>
<div class="t " style="left:1660px;top:1014.5px;font-size:15px;line-height:15px;color:#222;font-weight:normal;">10:27</div>
<svg class="r" style="left:1716px;top:1014px;" width="20" height="17" viewBox="0 0 20 17"><rect x="1" y="1" width="18" height="15" fill="none" stroke="#222" stroke-width="1.4"/><path d="M8 5V12L13 8.5Z" fill="#222"/></svg>
<svg class="r" style="left:1760px;top:1013px;" width="22" height="22" viewBox="0 0 22 22"><path d="M1 1H19V15H9L5 19V15H1Z" fill="#1a1a1a"/><path d="M4 5H16M4 8H16M4 11H12" stroke="#bbb" stroke-width="1.1"/><circle cx="15.5" cy="16" r="3.5" fill="none" stroke="#555" stroke-width="1"/></svg>
<div class="r" style="left:115px;top:1039px;width:1690px;height:2px;background:#000;"></div>
<div class="r" style="left:0px;top:1041px;width:1920px;height:39px;background:#cde0e6;"></div>
<svg class="r" style="left:12px;top:1050px;" width="20" height="20" viewBox="0 0 20 20"><svg viewBox="0 0 20 20" width="20" height="20"><path d="M0 2.8L8.2 1.7V9.5H0ZM9 1.6L20 0V9.5H9ZM0 10.3H8.2V18.3L0 17.2ZM9 10.3H20V20L9 18.4Z" fill="#111"/></svg></svg>
<div class="r" style="left:45px;top:1041px;width:205px;height:39px;background:#e8ebec;"></div>
<svg class="r" style="left:50px;top:1047px;" width="24" height="24" viewBox="0 0 24 24"><svg viewBox="0 0 24 24" width="24" height="24"><path d="M20.5 13H7.5C7.8 16 9.8 18 12.5 18C14.5 18 16 17 16.8 15.5H20.3C19.2 19 16.2 21.5 12.5 21.5C7.5 21.5 4 17.5 4 12.5C4 7.5 7.5 3.5 12.5 3.5C17.5 3.5 20.8 7.5 20.5 13ZM7.6 10.5H16.8C16.5 8 14.8 6.5 12.2 6.5C9.8 6.5 8 8 7.6 10.5Z" fill="#1e8fe0"/><path d="M3 20C1 17 4 9 12 5C18 2 23 1 22.5 4.5" stroke="#1e8fe0" stroke-width="1.6" fill="none"/></svg></svg>
<div class="t " style="left:77px;top:1052.0px;font-size:16px;line-height:16px;color:#111;font-weight:normal;">输入你想搜的</div>
<div class="r" style="left:250px;top:1041px;width:70px;height:39px;background:#1c8cf5;"></div>
<div class="t " style="left:255px;top:1052.0px;font-size:16px;line-height:16px;color:#fff;font-weight:normal;">搜索一下</div>
<div class="r" style="left:328px;top:1050px;width:1.4px;height:22px;background:#333;"></div>
<div class="r" style="left:333px;top:1050px;width:1.4px;height:22px;background:#333;"></div>
<svg class="r" style="left:355px;top:1048px;" width="24" height="24" viewBox="0 0 24 24"><svg viewBox="0 0 24 24" width="24" height="24"><defs><linearGradient id="eg355" x1="0" y1="1" x2="1" y2="0"><stop offset="0" stop-color="#0c59a4"/><stop offset="1" stop-color="#33c0e0"/></linearGradient></defs><circle cx="12" cy="12" r="11" fill="url(#eg355)"/><path d="M5 14C5 9 9 7 12.5 7C16 7 19 9 19 12.5H9C9 16 12 18.5 15.5 18.5C17.5 18.5 19.5 17.5 20.5 16.5C19 20.5 15.5 23 12 23C7.5 23 5 18 5 14Z" fill="#5bd25b" opacity="0.85"/><circle cx="14" cy="12.5" r="3.2" fill="#fff" opacity="0.9"/></svg></svg>
<svg class="r" style="left:401px;top:1048px;" width="23" height="23" viewBox="0 0 23 23"><svg viewBox="0 0 24 24" width="23" height="23"><path d="M1 4H9L11 6H23V20H1Z" fill="#e8a820"/><path d="M1 8H23V20H1Z" fill="#ffc83d"/><path d="M7 20V13H17V20H14V16H10V20Z" fill="#1e6fd0"/></svg></svg>
<div class="r" style="left:397px;top:1077px;width:35px;height:3px;background:#1c6fd6;"></div>
<div class="r" style="left:438px;top:1041px;width:41px;height:39px;background:#e2eef3;"></div>
<svg class="r" style="left:447px;top:1048px;" width="24" height="24" viewBox="0 0 24 24"><svg viewBox="0 0 24 24" width="24" height="24"><path d="M11 3C6 3 2 6.5 2 10.5C2 13 3.5 15 5.5 16.5L4.5 20L8.5 18C9.3 18.2 10.2 18.3 11 18.3C16 18.3 20 14.8 20 10.5C20 6.5 16 3 11 3Z" stroke="#2a9ee0" stroke-width="2" fill="none"/><circle cx="8" cy="10.5" r="1.2" fill="#2a9ee0"/><circle cx="13" cy="10.5" r="1.2" fill="#2a9ee0"/><path d="M19 12L23 16L19 20L15 16Z" fill="#f36d2a"/><path d="M19 14L21 16L19 18L17 16Z" fill="#52c44a"/></svg></svg>
<div class="r" style="left:438px;top:1077px;width:41px;height:3px;background:#1c6fd6;"></div>
<div class="r" style="left:480px;top:1041px;width:1px;height:39px;background:#bcd0d8;"></div>
<svg class="r" style="left:493px;top:1048px;" width="24" height="24" viewBox="0 0 24 24"><svg viewBox="0 0 24 24" width="24" height="24"><rect x="6" y="2" width="17" height="20" rx="1.5" fill="#fff" stroke="#2b5cb8" stroke-width="1.2"/><path d="M9 7H20M9 11H20M9 15H20" stroke="#2b5cb8" stroke-width="1.3"/><rect x="1" y="5" width="13" height="14" rx="1" fill="#2b5cb8"/><text x="7.5" y="16" font-size="10" font-family="Liberation Sans" font-weight="bold" fill="#fff" text-anchor="middle">W</text></svg></svg>
<div class="r" style="left:489px;top:1077px;width:35px;height:3px;background:#1c6fd6;"></div>
<div class="r" style="left:1912px;top:1041px;width:1px;height:39px;background:#9ab0b8;"></div>
<svg class="r" style="left:1529px;top:1048px;" width="15" height="24" viewBox="0 0 15 24"><svg viewBox="0 0 14 24" width="15" height="24"><rect x="3.5" y="0.5" width="7" height="5" fill="#ddd" stroke="#555" stroke-width="0.8"/><rect x="1" y="5" width="12" height="18.5" rx="1.5" fill="#5ec444" stroke="#2a6a20" stroke-width="0.8"/><path d="M7 8V19M5 10.5L7 8L9 10.5M4.5 13V15L7 17M9.5 12V14.5L7 16" stroke="#fff" stroke-width="1" fill="none"/></svg></svg>
<svg class="r" style="left:1559px;top:1053px;" width="18" height="12" viewBox="0 0 18 12"><path d="M1 11L9 3L17 11" stroke="#111" stroke-width="1.6" fill="none"/></svg>
<svg class="r" style="left:1589px;top:1050px;" width="20" height="20" viewBox="0 0 20 20"><path d="M1 19A18 18 0 0 1 19 1M5.5 19A13.5 13.5 0 0 1 19 5.5M10 19A9 9 0 0 1 19 10" stroke="#555" stroke-width="1.2" fill="none"/><circle cx="16.5" cy="16.5" r="2" fill="#111"/></svg>
<svg class="r" style="left:1615px;top:1049px;" width="24" height="22" viewBox="0 0 24 22"><path d="M2 8H6L11 4V18L6 14H2Z" stroke="#111" stroke-width="1.4" fill="none" stroke-linejoin="round"/><path d="M14 8A4 4 0 0 1 14 14M17 5.5A8 8 0 0 1 17 16.5M20 3A11.5 11.5 0 0 1 20 19" stroke="#111" stroke-width="1.3" fill="none"/></svg>
<svg class="r" style="left:1645px;top:1051px;" width="24" height="18" viewBox="0 0 24 18"><path d="M3.5 2V7M1 4.5H6" stroke="#111" stroke-width="1.3"/><rect x="5.5" y="5.5" width="15" height="10" fill="#111" stroke="#111" stroke-width="1"/><rect x="21" y="8" width="2" height="5" fill="#111"/></svg>
<div class="t " style="left:1676px;top:1050.0px;font-size:20px;line-height:20px;color:transparent;font-weight:normal;-webkit-text-stroke:0.4px #888">中</div>
<svg class="r" style="left:1710px;top:1048px;" width="24" height="24" viewBox="0 0 24 24"><svg viewBox="0 0 24 24" width="24" height="24"><path d="M3 5C3 3 5 2 7 2L20 1C22 1 23 2.5 22.8 4.5L21.5 19C21.3 21 19.8 22.5 17.8 22.5L5 23C3 23 1.5 21.5 1.5 19.5Z" fill="#f06a28"/><path d="M16.5 7.5C15.5 6.5 13.5 6 11.5 6.3C9 6.7 7.5 8 7.8 9.8C8.2 12.5 15.5 11 16 14.2C16.3 16.2 14.5 17.8 11.8 18C9.8 18.2 8 17.5 6.8 16.3" stroke="#fff" stroke-width="2.6" fill="none" stroke-linecap="round"/></svg></svg>
<div class="t " style="left:1753px;top:1052.5px;font-size:17px;line-height:17px;color:#111;font-weight:normal;">22:05</div>
<svg class="r" style="left:1817px;top:1049px;" width="34" height="28" viewBox="0 0 34 28"><path d="M1 1H24V20H1Z" fill="#111"/><path d="M9 6V15L16 10.5Z" fill="#fff"/><rect x="12" y="11" width="15" height="15" rx="1" fill="#e3161e"/><text x="19.5" y="23" font-size="12" font-family="Liberation Sans" fill="#fff" text-anchor="middle">3</text></svg>
<svg class="r" style="left:1866px;top:1048px;" width="26" height="26" viewBox="0 0 26 26"><path d="M1 2H25V19H11L7 24V19H1Z" fill="#111"/><path d="M5 7H21M5 10.5H21M5 14H16" stroke="#fff" stroke-width="1.3"/></svg>
<div class="r" style="left:515px;top:89px;width:890px;height:56px;background:#1c1b1d;"></div>
<div class="t" style="left:497px;width:120px;text-align:center;top:123px;font-size:11px;line-height:12px;color:#f0563f">结束演示</div>
<svg class="r" style="left:548px;top:100px;" width="17" height="17" viewBox="0 0 17 17"><rect x="0.5" y="0.5" width="16" height="12" rx="1.5" fill="#f0563f"/><path d="M5 6.5H11.5M9 4L11.5 6.5L9 9" stroke="#1c1b1d" stroke-width="1.4" fill="none"/><path d="M8.5 12.5V15.5M4 15.8H13" stroke="#f0563f" stroke-width="1.5"/></svg>
<div class="t" style="left:581px;width:120px;text-align:center;top:123px;font-size:11px;line-height:12px;color:#cfcfcf">切换窗口</div>
<svg class="r" style="left:632px;top:100px;" width="18" height="17" viewBox="0 0 18 17"><rect x="0.5" y="0.5" width="17" height="13" rx="1.5" fill="#f2f2f2"/><path d="M9 11V4M7 6L9 3.8L11 6" stroke="#1c1b1d" stroke-width="1.4" fill="none"/><path d="M5.5 16H12.5" stroke="#f2f2f2" stroke-width="1.5"/></svg>
<div class="t" style="left:647px;width:120px;text-align:center;top:123px;font-size:11px;line-height:12px;color:#cfcfcf">演示PPT</div>
<svg class="r" style="left:700px;top:99px;" width="15" height="18" viewBox="0 0 15 18"><path d="M0.5 2A1.5 1.5 0 0 1 2 0.5H9.5L14.5 5.5V16A1.5 1.5 0 0 1 13 17.5H2A1.5 1.5 0 0 1 0.5 16Z" fill="#f2f2f2"/><text x="7" y="14" font-size="11" font-family="Liberation Sans" fill="#1c1b1d" text-anchor="middle">P</text></svg>
<div class="t" style="left:726px;width:120px;text-align:center;top:123px;font-size:11px;line-height:12px;color:#cfcfcf">签到</div>
<svg class="r" style="left:779px;top:98px;" width="17" height="18" viewBox="0 0 17 18"><rect x="0.5" y="2.5" width="16" height="14.5" rx="1.5" fill="#f2f2f2"/><path d="M4 0.5V4M13 0.5V4" stroke="#f2f2f2" stroke-width="1.4"/><path d="M5 9.5L7.8 12.2L12.5 7.5" stroke="#1c1b1d" stroke-width="1.4" fill="none"/></svg>
<div class="t" style="left:807px;width:120px;text-align:center;top:123px;font-size:11px;line-height:12px;color:#cfcfcf">分享直播</div>
<svg class="r" style="left:860px;top:97px;" width="15" height="21" viewBox="0 0 15 21"><rect x="0.5" y="7" width="14" height="13.5" rx="1.5" fill="#f2f2f2"/><path d="M7.5 13V1.5M5 4L7.5 1.5L10 4" stroke="#f2f2f2" stroke-width="1.4" fill="none"/><path d="M7.5 7V13" stroke="#1c1b1d" stroke-width="1.4"/></svg>
<div class="t" style="left:894px;width:120px;text-align:center;top:123px;font-size:11px;line-height:12px;color:#cfcfcf">麦克风已开</div>
<svg class="r" style="left:947px;top:100px;" width="15" height="18" viewBox="0 0 15 18"><rect x="4" y="0.5" width="7" height="11" rx="3.5" fill="#f2f2f2"/><path d="M1.2 7.5A6.3 6.3 0 0 0 13.8 7.5" stroke="#f2f2f2" stroke-width="1.5" fill="none"/><path d="M7.5 14V17.5" stroke="#f2f2f2" stroke-width="1.5"/></svg>
<div class="t" style="left:972px;width:120px;text-align:center;top:123px;font-size:11px;line-height:12px;color:#cfcfcf">美颜与镜像</div>
<svg class="r" style="left:1022px;top:99px;" width="20" height="19" viewBox="0 0 20 19"><path d="M10 3C11 8.5 12 9.5 17 10.5C12 11.5 11 12.5 10 18C9 12.5 8 11.5 3 10.5C8 9.5 9 8.5 10 3Z" fill="#f2f2f2"/><path d="M16.5 0.5C16.8 2 17.2 2.3 18.8 2.6C17.2 2.9 16.8 3.2 16.5 4.8C16.2 3.2 15.8 2.9 14.2 2.6C15.8 2.3 16.2 2 16.5 0.5Z" fill="#f2f2f2"/><path d="M3 13.5C3.2 14.8 3.5 15.1 4.8 15.3C3.5 15.5 3.2 15.8 3 17.2C2.8 15.8 2.5 15.5 1.2 15.3C2.5 15.1 2.8 14.8 3 13.5Z" fill="#f2f2f2"/></svg>
<div class="r" style="left:599px;top:112px;width:1px;height:10px;background:#444;"></div>
<div class="r" style="left:750px;top:112px;width:1px;height:10px;background:#444;"></div>
<div class="r" style="left:829px;top:112px;width:1px;height:10px;background:#444;"></div>
<div class="r" style="left:909px;top:112px;width:1px;height:10px;background:#444;"></div>
<div class="r" style="left:1234px;top:97px;width:66px;height:35px;background:#2b2b2b;border-radius:18px"></div>
<div class="t " style="left:1253px;top:107.5px;font-size:14px;line-height:14px;color:#c8c8c8;font-weight:normal;">暂停</div>
<div class="r" style="left:1317px;top:97px;width:67px;height:35px;background:#f5523d;border-radius:18px"></div>
<div class="t " style="left:1336px;top:107.5px;font-size:14px;line-height:14px;color:#fff;font-weight:normal;">下课</div>
<svg class="r" style="left:1734px;top:993px;" width="15" height="23" viewBox="0 0 15 23"><path d="M1.5 1.5V17.5L5.5 13.8L8.5 20.8L11.3 19.6L8.4 12.8H13.6Z" fill="#fff" stroke="#111" stroke-width="1.2" stroke-linejoin="round"/></svg>
</body></html>
